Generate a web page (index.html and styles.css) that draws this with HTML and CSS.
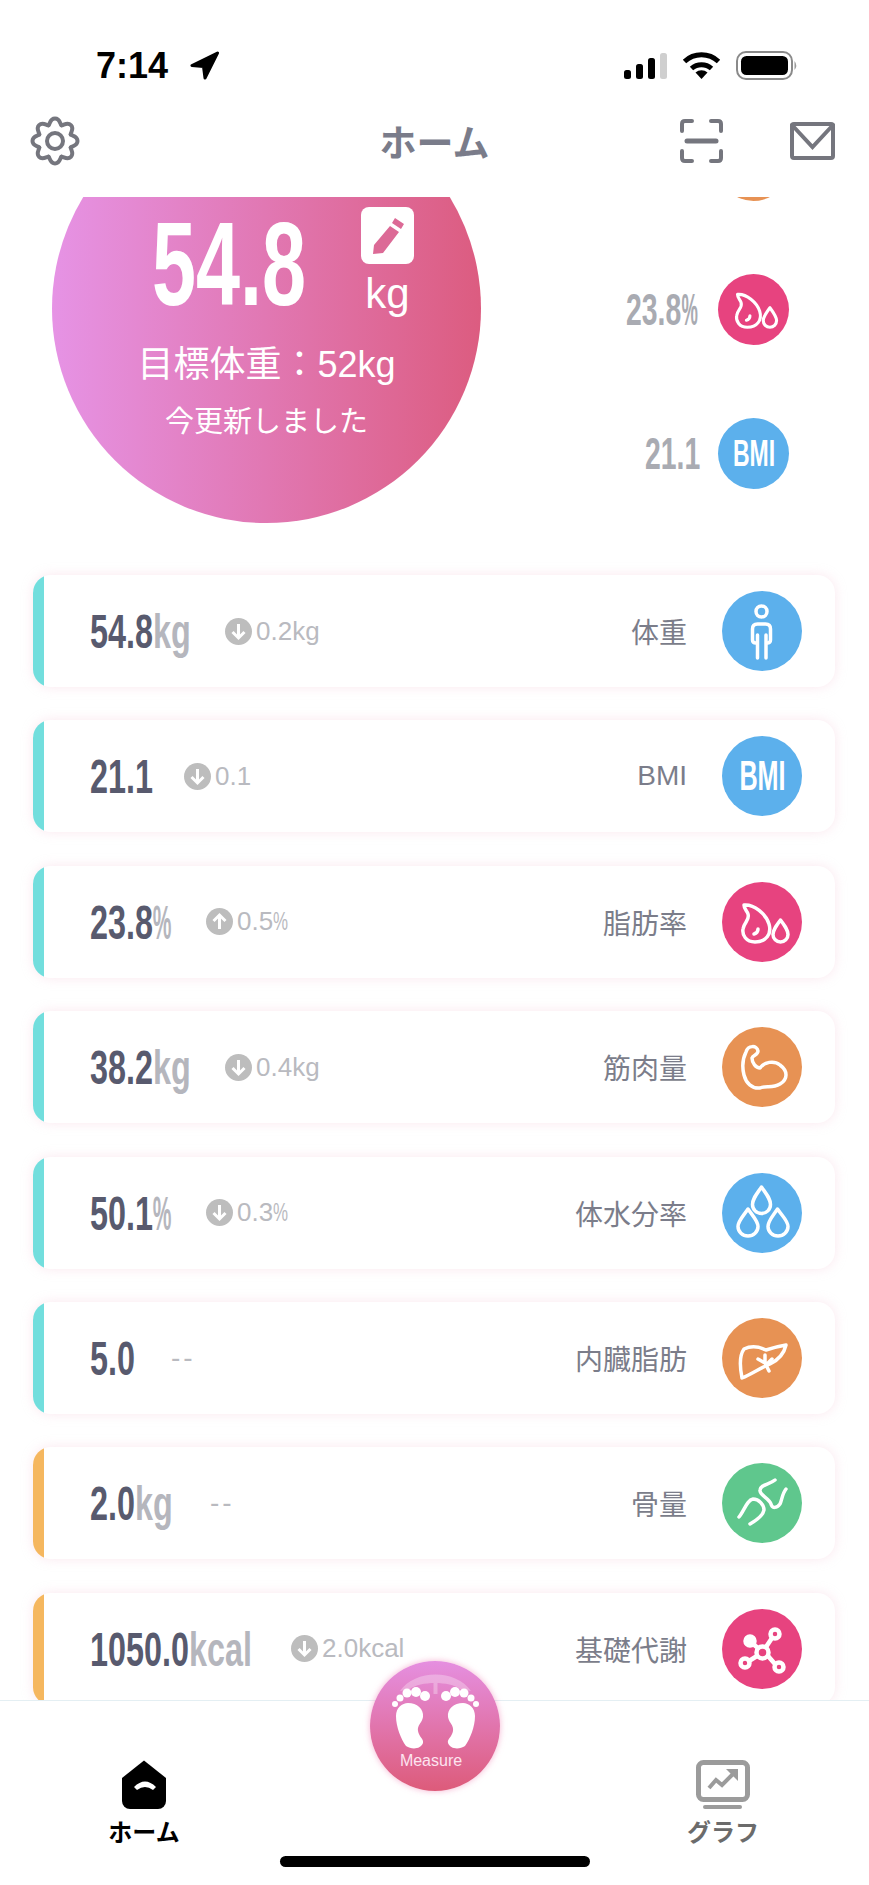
FILE: index.html
```html
<!DOCTYPE html>
<html lang="ja">
<head>
    <meta charset="UTF-8">
    <meta name="viewport" content="width=device-width, initial-scale=1.0">
    <title>ホーム</title>
    <link rel="stylesheet" href="styles.css">
</head>
<body>
    <!-- icons used more than once -->
    <svg class="sprites" aria-hidden="true">
        <symbol id="i-fat" viewBox="0 0 80 80">
            <path d="M22 23C32 22 44 32 47 42C50 52 44 60 33 60C24 60 20 53 21 47C22 40 28 38 26 32C25 29 22 27 22 23Z"/>
            <path d="M36 47Q36 51 32 52"/>
            <path d="M58.5 38C54 44 51 48 51 52.500a7.500 7.500 0 0 0 15 0C66 48 63 44 58.500 38Z"/>
        </symbol>
        <symbol id="i-muscle" viewBox="0 0 80 80">
            <path d="M24 25C26 18 35 18 36 24C36 28 31 28 30 31C30 36 34 41 38 41C42 35 52 33 58 38C66 44 66 52 58 57C50 62 44 58 38 61C30 62 24 56 22 48C20 40 21 31 24 25Z"/>
        </symbol>
        <symbol id="i-down" viewBox="0 0 27 27">
            <circle class="delta-bg" cx="13.500" cy="13.500" r="13.500"/>
            <path class="delta-arrow" d="M13.500 6V20M7.500 14L13.500 20L19.500 14"/>
        </symbol>
        <symbol id="i-up" viewBox="0 0 27 27">
            <circle class="delta-bg" cx="13.500" cy="13.500" r="13.500"/>
            <path class="delta-arrow" d="M13.500 21V7M7.500 13L13.500 7L19.500 13"/>
        </symbol>
        <path id="gear-tooth" d="M-6.500-15.700C-5-17-5-22.500 0-22.500C5-22.500 5-17 6.500-15.700"/>
    </svg>

    <div class="phone">
        <header class="top">
            <div class="status-bar">
                <div class="status-left">
                    <span class="clock">7:14</span>
                    <svg width="29" height="29" viewBox="0 0 29 29"><path class="location" d="M27.500 2L2 14.500L13.500 15.500L15 27Z"/></svg>
                </div>
                <div class="status-right">
                    <svg width="43" height="26" viewBox="0 0 43 26">
                        <rect x="0" y="17" width="7" height="9" rx="2.500"/>
                        <rect x="12" y="11" width="7" height="15" rx="2.500"/>
                        <rect x="24" y="5" width="7" height="21" rx="2.500"/>
                        <rect class="signal-off" x="36" y="0" width="7" height="26" rx="2.500"/>
                    </svg>
                    <svg width="39" height="27" viewBox="0 0 39 27">
                        <path class="wifi" d="M2.500 9.500A25 25 0 0 1 36.500 9.500"/>
                        <path class="wifi" d="M9.500 16.500A15 15 0 0 1 29.500 16.500"/>
                        <path d="M13.500 20.500A9 9 0 0 1 25.500 20.500L19.500 27Z"/>
                    </svg>
                    <svg width="62" height="29" viewBox="0 0 62 29">
                        <rect class="battery-edge" x="1" y="1" width="55" height="27" rx="9"/>
                        <rect x="5" y="5" width="47" height="19" rx="5.500"/>
                        <path class="battery-cap" d="M58.500 10Q62 14.500 58.500 19Z"/>
                    </svg>
                </div>
            </div>
            <nav class="nav-bar">
                <svg class="gear" width="50" height="50" viewBox="-25 -25 50 50">
                    <use href="#gear-tooth"/>
                    <use href="#gear-tooth" transform="rotate(45)"/>
                    <use href="#gear-tooth" transform="rotate(90)"/>
                    <use href="#gear-tooth" transform="rotate(135)"/>
                    <use href="#gear-tooth" transform="rotate(180)"/>
                    <use href="#gear-tooth" transform="rotate(225)"/>
                    <use href="#gear-tooth" transform="rotate(270)"/>
                    <use href="#gear-tooth" transform="rotate(315)"/>
                    <circle cx="0" cy="0" r="8"/>
                </svg>
                <h1 class="nav-title">ホーム</h1>
                <div class="nav-actions">
                    <svg class="nav-icon" width="45" height="44" viewBox="0 0 45 44">
                        <path d="M3 12V5Q3 2 6 2H13M32 2H39Q42 2 42 5V12M3 32V39Q3 42 6 42H13M32 42H39Q42 42 42 39V32"/>
                        <path class="scan-line" d="M8 22H37"/>
                    </svg>
                    <svg class="nav-icon" width="45" height="38" viewBox="0 0 45 38">
                        <rect x="2" y="2" width="41" height="34" rx="2"/>
                        <path d="M2 3L22.500 25L43 3"/>
                    </svg>
                </div>
            </nav>
        </header>

        <main class="content">
            <section class="hero">
                <div class="gauge">
                    <div class="reading">
                        <div class="reading-value">54.8</div>
                        <div class="reading-side">
                            <div class="edit-btn">
                                <svg width="37" height="40" viewBox="0 0 37 40"><path d="M26 2L35 8L32 13L23 7ZM21 10L30 16L14 37L4 38L5 29Z"/></svg>
                            </div>
                            <div class="reading-unit">kg</div>
                        </div>
                    </div>
                    <div class="target">目標体重：52kg</div>
                    <div class="updated">今更新しました</div>
                </div>
                <div class="side-list">
                    <div class="side-item">
                        <div class="badge orange"><svg class="glyph"><use href="#i-muscle"/></svg></div>
                    </div>
                    <div class="side-item">
                        <span class="side-value" style="width: 72px">23.8<span class="pct">%</span></span>
                        <div class="badge pink"><svg class="glyph"><use href="#i-fat"/></svg></div>
                    </div>
                    <div class="side-item">
                        <span class="side-value" style="width: 53px">21.1</span>
                        <div class="badge blue"><span class="bmi bmi-small">BMI</span></div>
                    </div>
                </div>
            </section>

            <section class="metrics">
                <div class="card">
                    <div class="card-bar teal"></div>
                    <div class="value" style="width: 99px">54.8<span class="unit">kg</span></div>
                    <div class="delta"><svg class="delta-icon"><use href="#i-down"/></svg><span>0.2kg</span></div>
                    <div class="label">体重</div>
                    <div class="badge large blue">
                        <svg class="glyph" viewBox="0 0 80 80">
                            <circle cx="39.500" cy="20.500" r="5.500"/>
                            <path d="M34 52C31.500 52 30.500 51 30.500 49V38Q30.500 33 35.500 33H43.500Q48.500 33 48.500 38V49C48.500 51 47.500 52 45 52"/>
                            <path d="M35.500 44V67M44 44V67"/>
                        </svg>
                    </div>
                </div>
                <div class="card">
                    <div class="card-bar teal"></div>
                    <div class="value" style="width: 58px">21.1</div>
                    <div class="delta"><svg class="delta-icon"><use href="#i-down"/></svg><span>0.1</span></div>
                    <div class="label">BMI</div>
                    <div class="badge large blue"><span class="bmi">BMI</span></div>
                </div>
                <div class="card">
                    <div class="card-bar teal"></div>
                    <div class="value" style="width: 80px">23.8<span class="unit pct">%</span></div>
                    <div class="delta"><svg class="delta-icon"><use href="#i-up"/></svg><span>0.5<span class="pct">%</span></span></div>
                    <div class="label">脂肪率</div>
                    <div class="badge large pink"><svg class="glyph"><use href="#i-fat"/></svg></div>
                </div>
                <div class="card">
                    <div class="card-bar teal"></div>
                    <div class="value" style="width: 99px">38.2<span class="unit">kg</span></div>
                    <div class="delta"><svg class="delta-icon"><use href="#i-down"/></svg><span>0.4kg</span></div>
                    <div class="label">筋肉量</div>
                    <div class="badge large orange"><svg class="glyph"><use href="#i-muscle"/></svg></div>
                </div>
                <div class="card">
                    <div class="card-bar teal"></div>
                    <div class="value" style="width: 80px">50.1<span class="unit pct">%</span></div>
                    <div class="delta"><svg class="delta-icon"><use href="#i-down"/></svg><span>0.3<span class="pct">%</span></span></div>
                    <div class="label">体水分率</div>
                    <div class="badge large blue">
                        <svg class="glyph" viewBox="0 0 80 80">
                            <path d="M39.500 14C34 22 30.500 26 30.500 31.500a9 9 0 0 0 18 0C48.500 26 45 22 39.500 14Z"/>
                            <path d="M26 36C20.500 44 16 48 16 53.500a10 9.500 0 0 0 20 0C36 48 31.500 44 26 36Z"/>
                            <path d="M55.500 36C50 44 46 48 46 53.500a10 9.500 0 0 0 20 0C66 48 61 44 55.500 36Z"/>
                        </svg>
                    </div>
                </div>
                <div class="card">
                    <div class="card-bar teal"></div>
                    <div class="value" style="width: 43px">5.0</div>
                    <div class="delta delta-empty">--</div>
                    <div class="label">内臓脂肪</div>
                    <div class="badge large orange">
                        <svg class="glyph" viewBox="0 0 80 80">
                            <path d="M22 31C30 27 38 29 44 32C50 30 58 28 64 27C62 36 56 42 48 46C38 50 30 56 20 60C18 50 17 38 22 31Z"/>
                            <path d="M43 37V45L47 53M43 45L36 41M44 47L50 41"/>
                        </svg>
                    </div>
                </div>
                <div class="card">
                    <div class="card-bar amber"></div>
                    <div class="value" style="width: 82px">2.0<span class="unit">kg</span></div>
                    <div class="delta delta-empty">--</div>
                    <div class="label">骨量</div>
                    <div class="badge large green">
                        <svg class="glyph" viewBox="0 0 80 80">
                            <path d="M17 54C22 48 25 37 31 36C37 36 42 42 42 47C41 53 35 57 28 61"/>
                            <path d="M53 17C47 22 39 21 38 27C37 32 47 35 49 41C50 46 55 45 58 41C60 37 60 31 64 26"/>
                        </svg>
                    </div>
                </div>
                <div class="card">
                    <div class="card-bar amber"></div>
                    <div class="value" style="width: 165px">1050.0<span class="unit">kcal</span></div>
                    <div class="delta"><svg class="delta-icon"><use href="#i-down"/></svg><span>2.0kcal</span></div>
                    <div class="label">基礎代謝</div>
                    <div class="badge large pink">
                        <svg class="glyph glyph-bold" viewBox="0 0 80 80">
                            <circle cx="40.500" cy="43.500" r="6"/>
                            <circle cx="53" cy="25" r="4.500"/>
                            <circle class="solid" cx="28" cy="32" r="4.500"/>
                            <circle cx="23" cy="54" r="4.500"/>
                            <circle cx="57" cy="58" r="4.500"/>
                            <path d="M44 38L50 29M36 39L31 35M35 47L27 52M46 47L53 55"/>
                        </svg>
                    </div>
                </div>
            </section>
        </main>

        <footer class="tab-bar">
            <div class="tab tab-active">
                <svg width="44" height="49" viewBox="0 0 44 49">
                    <path d="M22 0.500L44 18V41a8 8 0 0 1-8 8H8a8 8 0 0 1-8-8V18Z"/>
                    <path class="home-arc" d="M12 27Q23 16 34 27L31 30Q23 24 15 30Z"/>
                </svg>
                <span>ホーム</span>
            </div>
            <div class="tab">
                <svg width="54" height="49" viewBox="0 0 54 49">
                    <rect class="graph-frame" x="2.500" y="2.500" width="49" height="37" rx="5"/>
                    <path class="graph-line" d="M13 28L20 20L26 25L38 13"/>
                    <path class="graph-head" d="M30 9H42V21Z"/>
                    <rect class="graph-base" x="7" y="45" width="39" height="4" rx="2"/>
                </svg>
                <span>グラフ</span>
            </div>

            <div class="measure">
                <svg width="130" height="90" viewBox="0 0 130 90">
                    <path class="measure-arc" d="M30 30C45 8 86 8 101 30L90 28C80 20 50 20 40 28Z"/>
                    <rect class="measure-arc" x="63.500" y="22" width="4" height="11"/>
                    <g class="foot">
                        <path d="M38 42C47 42 54 48 53 56C52 62 47 64 48 70C49 76 54 78 53 82C51 88 42 89 36 85C31 78 26 66 26 55C26 47 32 42 38 42Z"/>
                        <circle cx="55" cy="35" r="5"/>
                        <circle cx="46" cy="31" r="5"/>
                        <circle cx="37" cy="32" r="4.500"/>
                        <circle cx="30" cy="37" r="3.500"/>
                        <circle cx="25" cy="43" r="3"/>
                    </g>
                    <g class="foot" transform="translate(131 0) scale(-1 1)">
                        <path d="M38 42C47 42 54 48 53 56C52 62 47 64 48 70C49 76 54 78 53 82C51 88 42 89 36 85C31 78 26 66 26 55C26 47 32 42 38 42Z"/>
                        <circle cx="55" cy="35" r="5"/>
                        <circle cx="46" cy="31" r="5"/>
                        <circle cx="37" cy="32" r="4.500"/>
                        <circle cx="30" cy="37" r="3.500"/>
                        <circle cx="25" cy="43" r="3"/>
                    </g>
                </svg>
                <span class="measure-label">Measure</span>
            </div>
            <div class="home-indicator"></div>
        </footer>
    </div>
</body>
</html>
```

FILE: styles.css
```css
body, h1 {
    margin: 0;
    padding: 0;
    box-sizing: border-box;
}

body {
    font-family: "Liberation Sans", "Noto Sans CJK JP", sans-serif;
    background-color: #fff;
    color: #6f7280;
}

.sprites {
    display: none;
}

.phone {
    width: 869px;
    height: 1885px;
    display: flex;
    flex-direction: column;
    overflow: hidden;
    background: #fff;
}

/* status bar and nav */
.top {
    height: 197px;
    flex: none;
}

.status-bar {
    height: 100px;
    box-sizing: border-box;
    padding: 31px 71px 0 96px;
    display: flex;
    justify-content: space-between;
    align-items: center;
}

.status-left {
    display: flex;
    align-items: center;
    gap: 22px;
}

.clock {
    font-size: 36px;
    font-weight: 700;
    color: #000;
}

.location {
    fill: #000;
    stroke: #000;
    stroke-width: 3;
    stroke-linejoin: round;
}

.status-right {
    display: flex;
    align-items: center;
    gap: 15px;
}

.signal-off {
    fill: #cfcfcf;
}

.wifi {
    fill: none;
    stroke: #000;
    stroke-width: 5;
}

.battery-edge {
    fill: none;
    stroke: #8a8a8a;
    stroke-width: 2;
}

.battery-cap {
    fill: #9a9a9a;
}

.nav-bar {
    height: 97px;
    box-sizing: border-box;
    padding: 0 34px 16px 30px;
    display: grid;
    grid-template-columns: 1fr auto 1fr;
    align-items: center;
}

.gear {
    fill: none;
    stroke: #75767e;
    stroke-width: 4;
    stroke-linecap: round;
}

.nav-title {
    font-size: 37px;
    font-weight: 700;
    padding-left: 4px;
    color: #7a7c8a;
}

.nav-actions {
    display: flex;
    justify-content: flex-end;
    align-items: center;
    gap: 66px;
}

.nav-icon {
    fill: none;
    stroke: #75767e;
    stroke-width: 4;
    stroke-linecap: round;
}

.scan-line {
    stroke-width: 5;
}

/* scrolled content */
.content {
    flex: 1;
    min-height: 0;
    overflow: hidden;
}

.hero {
    height: 378px;
    overflow: hidden;
    display: flex;
    justify-content: space-between;
    padding: 0 80px 0 52px;
    box-sizing: border-box;
}

.gauge {
    width: 429px;
    height: 429px;
    flex: none;
    margin-top: -103px;
    padding-top: 110px;
    box-sizing: border-box;
    border-radius: 50%;
    background: linear-gradient(90deg, #e693e5, #dc5c80);
    color: #fff;
    display: flex;
    flex-direction: column;
    align-items: center;
}

.reading {
    align-self: flex-start;
    margin-left: 100px;
    display: flex;
    gap: 55px;
}

/* the numbers are a condensed face in the app, squeeze the bold sans to fit */
.reading-value {
    width: 154px;
    font-size: 119px;
    font-weight: 700;
    line-height: 119px;
    white-space: nowrap;
    transform: scaleX(0.665);
    transform-origin: left;
}

.reading-side {
    display: flex;
    flex-direction: column;
    align-items: center;
    padding-top: 3px;
    gap: 9px;
}

.edit-btn {
    width: 53px;
    height: 57px;
    border-radius: 8px;
    background: #fff;
    display: flex;
    align-items: center;
    justify-content: center;
}

.edit-btn svg {
    fill: #dc6a96;
}

.reading-unit {
    font-size: 42px;
    line-height: 42px;
}

.target {
    font-size: 36px;
    line-height: 40px;
    margin-top: 22px;
}

.updated {
    font-size: 29px;
    line-height: 36px;
    margin-top: 19px;
}

.side-list {
    margin-top: -67px;
    display: flex;
    flex-direction: column;
    align-items: flex-end;
    gap: 73px;
}

.side-item {
    display: flex;
    align-items: center;
    gap: 20px;
}

.side-value {
    font-size: 44px;
    font-weight: 700;
    color: #a9abb2;
    white-space: nowrap;
    transform: scaleX(0.645);
    transform-origin: left;
}

.pct {
    display: inline-block;
    transform: scaleX(0.65);
    transform-origin: left;
}

.badge {
    width: 71px;
    height: 71px;
    flex: none;
    border-radius: 50%;
    display: flex;
    align-items: center;
    justify-content: center;
    overflow: hidden;
}

.badge.large {
    width: 80px;
    height: 80px;
}

.blue {
    background-color: #5cb0ec;
}

.pink {
    background-color: #e7437f;
}

.orange {
    background-color: #e79254;
}

.green {
    background-color: #5fc78d;
}

.glyph {
    width: 100%;
    height: 100%;
    fill: none;
    stroke: #fff;
    stroke-width: 3.5;
    stroke-linecap: round;
    stroke-linejoin: round;
}

.glyph-bold {
    stroke-width: 4.5;
}

.glyph .solid {
    fill: #fff;
}

.bmi {
    font-size: 42px;
    font-weight: 700;
    color: #fff;
    transform: scaleX(0.6);
}

.bmi-small {
    font-size: 36px;
    transform: scaleX(0.64);
}

/* metric cards */
.metrics {
    margin: 0 34px 0 33px;
    display: flex;
    flex-direction: column;
    gap: 33.4px;
}

.card {
    height: 112px;
    flex: none;
    border-radius: 18px;
    background: #fff;
    box-shadow: 0 0 12px rgba(240, 185, 205, 0.35);
    overflow: hidden;
    display: flex;
    align-items: center;
    padding-right: 33px;
}

.card-bar {
    width: 11px;
    height: 100%;
    flex: none;
    margin-right: 46px;
}

.teal {
    background-color: #72dedd;
}

.amber {
    background-color: #f5b75f;
}

.value {
    flex: none;
    font-size: 49px;
    font-weight: 700;
    color: #585a6e;
    white-space: nowrap;
    transform: scaleX(0.66);
    transform-origin: left;
}

.unit {
    color: #b5b6bd;
}

.delta {
    margin-left: 36px;
    display: flex;
    align-items: center;
    gap: 4px;
    font-size: 26px;
    color: #b9bac0;
}

.delta-empty {
    margin-left: 38px;
    font-size: 28px;
    letter-spacing: 3px;
}

.delta-icon {
    width: 27px;
    height: 27px;
}

.delta-bg {
    fill: #bdbdbd;
}

.delta-arrow {
    fill: none;
    stroke: #fff;
    stroke-width: 3;
}

.label {
    margin-left: auto;
    margin-right: 35px;
    font-size: 28px;
    color: #7b7d8a;
}

/* bottom tabs */
.tab-bar {
    height: 185px;
    flex: none;
    box-sizing: border-box;
    border-top: 1px solid #e4eff3;
    background: #fff;
    position: relative;
    display: flex;
    justify-content: space-between;
    padding: 59px 101px 0 99px;
}

.tab {
    width: 90px;
    display: flex;
    flex-direction: column;
    align-items: center;
    gap: 9px;
    font-size: 24px;
    font-weight: 700;
    line-height: 30px;
    color: #6b6b6b;
}

.tab-active {
    color: #000;
}

.home-arc {
    fill: #fff;
}

.graph-frame {
    fill: none;
    stroke: #9b9b9b;
    stroke-width: 5;
}

.graph-line {
    fill: none;
    stroke: #9b9b9b;
    stroke-width: 4;
}

.graph-head,
.graph-base {
    fill: #9b9b9b;
}

.measure {
    position: absolute;
    left: 370px;
    top: -40px;
    width: 130px;
    height: 130px;
    border-radius: 50%;
    background: linear-gradient(180deg, #e58fe0, #dd5b7a);
    box-shadow: 0 0 6px rgba(240, 130, 180, 0.6);
    display: flex;
    flex-direction: column;
    align-items: center;
}

.measure svg {
    flex: none;
}

.measure-arc {
    fill: rgba(255, 255, 255, 0.3);
}

.foot {
    fill: #fff;
}

.measure-label {
    font-size: 16px;
    line-height: 20px;
    margin-right: 8px;
    color: #fde4f0;
}

.home-indicator {
    position: absolute;
    left: 280px;
    bottom: 18px;
    width: 310px;
    height: 11px;
    border-radius: 6px;
    background: #000;
}
```
